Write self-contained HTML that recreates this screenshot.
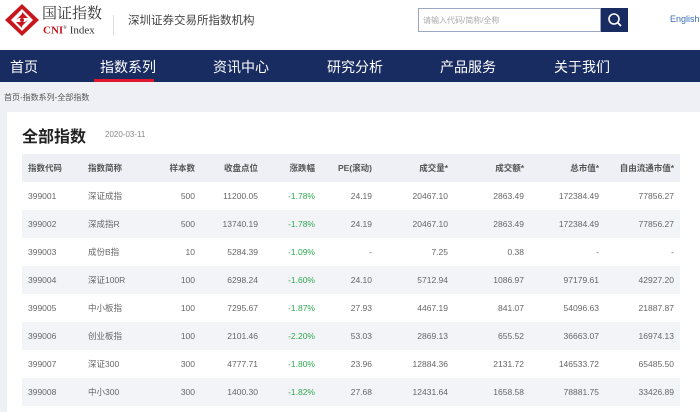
<!DOCTYPE html>
<html><head><meta charset="utf-8"><style>
*{margin:0;padding:0;box-sizing:border-box}
body{width:700px;height:412px;overflow:hidden;background:#eef0f5;font-family:"Liberation Sans","Noto Sans CJK SC",sans-serif;position:relative}
.hd{position:absolute;left:0;top:0;width:700px;height:50px;background:#fff}
.nav{position:absolute;left:0;top:50px;width:700px;height:32px;background:#182c62}
.nav span{position:absolute;top:7px;color:#fff;font-size:14px}
.ul{position:absolute;left:94px;top:79px;width:60px;height:3px;background:#e0182d}
.bc{position:absolute;left:4px;top:92px;font-size:8px;color:#555}
.card{position:absolute;left:7px;top:112px;width:693px;height:300px;background:#fff}
table{position:absolute;left:22px;top:154px;width:658px;border-collapse:collapse;font-size:8.5px;color:#666;table-layout:fixed}
td,th{height:28px;padding:0 6px;white-space:nowrap;overflow:hidden}
th{background:#eef0f5;font-weight:bold;color:#555;text-align:right}
tr:nth-child(odd) td{background:#f3f4f8}
td{text-align:right}
.l{text-align:left}
.g{color:#2fa84f}
</style></head><body>
<div class="hd">
<svg style="position:absolute;left:4px;top:3px" width="36" height="34" viewBox="0 0 36 34">
<path d="M18 1 L35 17 L18 33 L1 17 Z" fill="#c8161d"/>
<path d="M18 6 L29 17 L18 28 L7 17 Z" fill="#fff"/>
<path d="M18 9 L24 15 L15 15 L12 17 L18 11 Z M18 25 L12 19 L21 19 L24 17 L18 23Z" fill="#c8161d"/>
<circle cx="18" cy="17" r="2" fill="#c8161d"/>
</svg>
<div style="position:absolute;left:42px;top:4px;font-size:15px;line-height:18px;color:#333;font-family:'Noto Serif CJK SC',serif;white-space:nowrap">国证指数</div>
<div style="position:absolute;left:43px;top:22px;font-size:11px;line-height:13px;font-family:'Liberation Serif',serif;color:#333;white-space:nowrap"><b style="color:#c8161d">CNI</b><sup style="font-size:5px">®</sup> Index</div>
<div style="position:absolute;left:113px;top:15px;width:1px;height:20px;background:#ddd"></div>
<div style="position:absolute;left:128px;top:12px;font-size:11.5px;color:#444">深圳证券交易所指数机构</div>
<div style="position:absolute;left:418px;top:8px;width:183px;height:24px;border:1px solid #9aa6c4;background:#fff;font-size:8px;color:#aaa;padding:6px 4px">请输入代码/简称/全称</div>
<div style="position:absolute;left:601px;top:8px;width:27px;height:24px;background:#182c62">
<svg width="27" height="24" viewBox="0 0 27 24"><circle cx="13" cy="11" r="5" fill="none" stroke="#fff" stroke-width="1.6"/><path d="M16.5 14.5 L20 18" stroke="#fff" stroke-width="1.8"/></svg></div>
<div style="position:absolute;left:670px;top:14px;font-size:9px;color:#3b6fb6">English</div>
</div>
<div class="nav"><span style="left:10px">首页</span><span style="left:100px">指数系列</span><span style="left:213px">资讯中心</span><span style="left:327px">研究分析</span><span style="left:440px">产品服务</span><span style="left:554px">关于我们</span></div>
<div class="ul"></div>
<div class="bc">首页-指数系列-全部指数</div>
<div class="card">
<div style="position:absolute;left:15px;top:11px;font-size:16px;font-weight:bold;color:#222">全部指数</div>
<div style="position:absolute;left:98px;top:18px;font-size:8px;color:#888">2020-03-11</div>
</div>
<table>
<colgroup><col style="width:60px"><col style="width:68px"><col style="width:51px"><col style="width:63px"><col style="width:57px"><col style="width:57px"><col style="width:76px"><col style="width:76px"><col style="width:75px"><col style="width:75px"></colgroup>
<tr><th class="l">指数代码</th><th class="l">指数简称</th><th>样本数</th><th>收盘点位</th><th>涨跌幅</th><th>PE(滚动)</th><th>成交量*</th><th>成交额*</th><th>总市值*</th><th>自由流通市值*</th></tr>
<tr><td class="l">399001</td><td class="l">深证成指</td><td>500</td><td>11200.05</td><td class="g">-1.78%</td><td>24.19</td><td>20467.10</td><td>2863.49</td><td>172384.49</td><td>77856.27</td></tr>
<tr><td class="l">399002</td><td class="l">深成指R</td><td>500</td><td>13740.19</td><td class="g">-1.78%</td><td>24.19</td><td>20467.10</td><td>2863.49</td><td>172384.49</td><td>77856.27</td></tr>
<tr><td class="l">399003</td><td class="l">成份B指</td><td>10</td><td>5284.39</td><td class="g">-1.09%</td><td>-</td><td>7.25</td><td>0.38</td><td>-</td><td>-</td></tr>
<tr><td class="l">399004</td><td class="l">深证100R</td><td>100</td><td>6298.24</td><td class="g">-1.60%</td><td>24.10</td><td>5712.94</td><td>1086.97</td><td>97179.61</td><td>42927.20</td></tr>
<tr><td class="l">399005</td><td class="l">中小板指</td><td>100</td><td>7295.67</td><td class="g">-1.87%</td><td>27.93</td><td>4467.19</td><td>841.07</td><td>54096.63</td><td>21887.87</td></tr>
<tr><td class="l">399006</td><td class="l">创业板指</td><td>100</td><td>2101.46</td><td class="g">-2.20%</td><td>53.03</td><td>2869.13</td><td>655.52</td><td>36663.07</td><td>16974.13</td></tr>
<tr><td class="l">399007</td><td class="l">深证300</td><td>300</td><td>4777.71</td><td class="g">-1.80%</td><td>23.96</td><td>12884.36</td><td>2131.72</td><td>146533.72</td><td>65485.50</td></tr>
<tr><td class="l">399008</td><td class="l">中小300</td><td>300</td><td>1400.30</td><td class="g">-1.82%</td><td>27.68</td><td>12431.64</td><td>1658.58</td><td>78881.75</td><td>33426.89</td></tr>
</table>
</body></html>
